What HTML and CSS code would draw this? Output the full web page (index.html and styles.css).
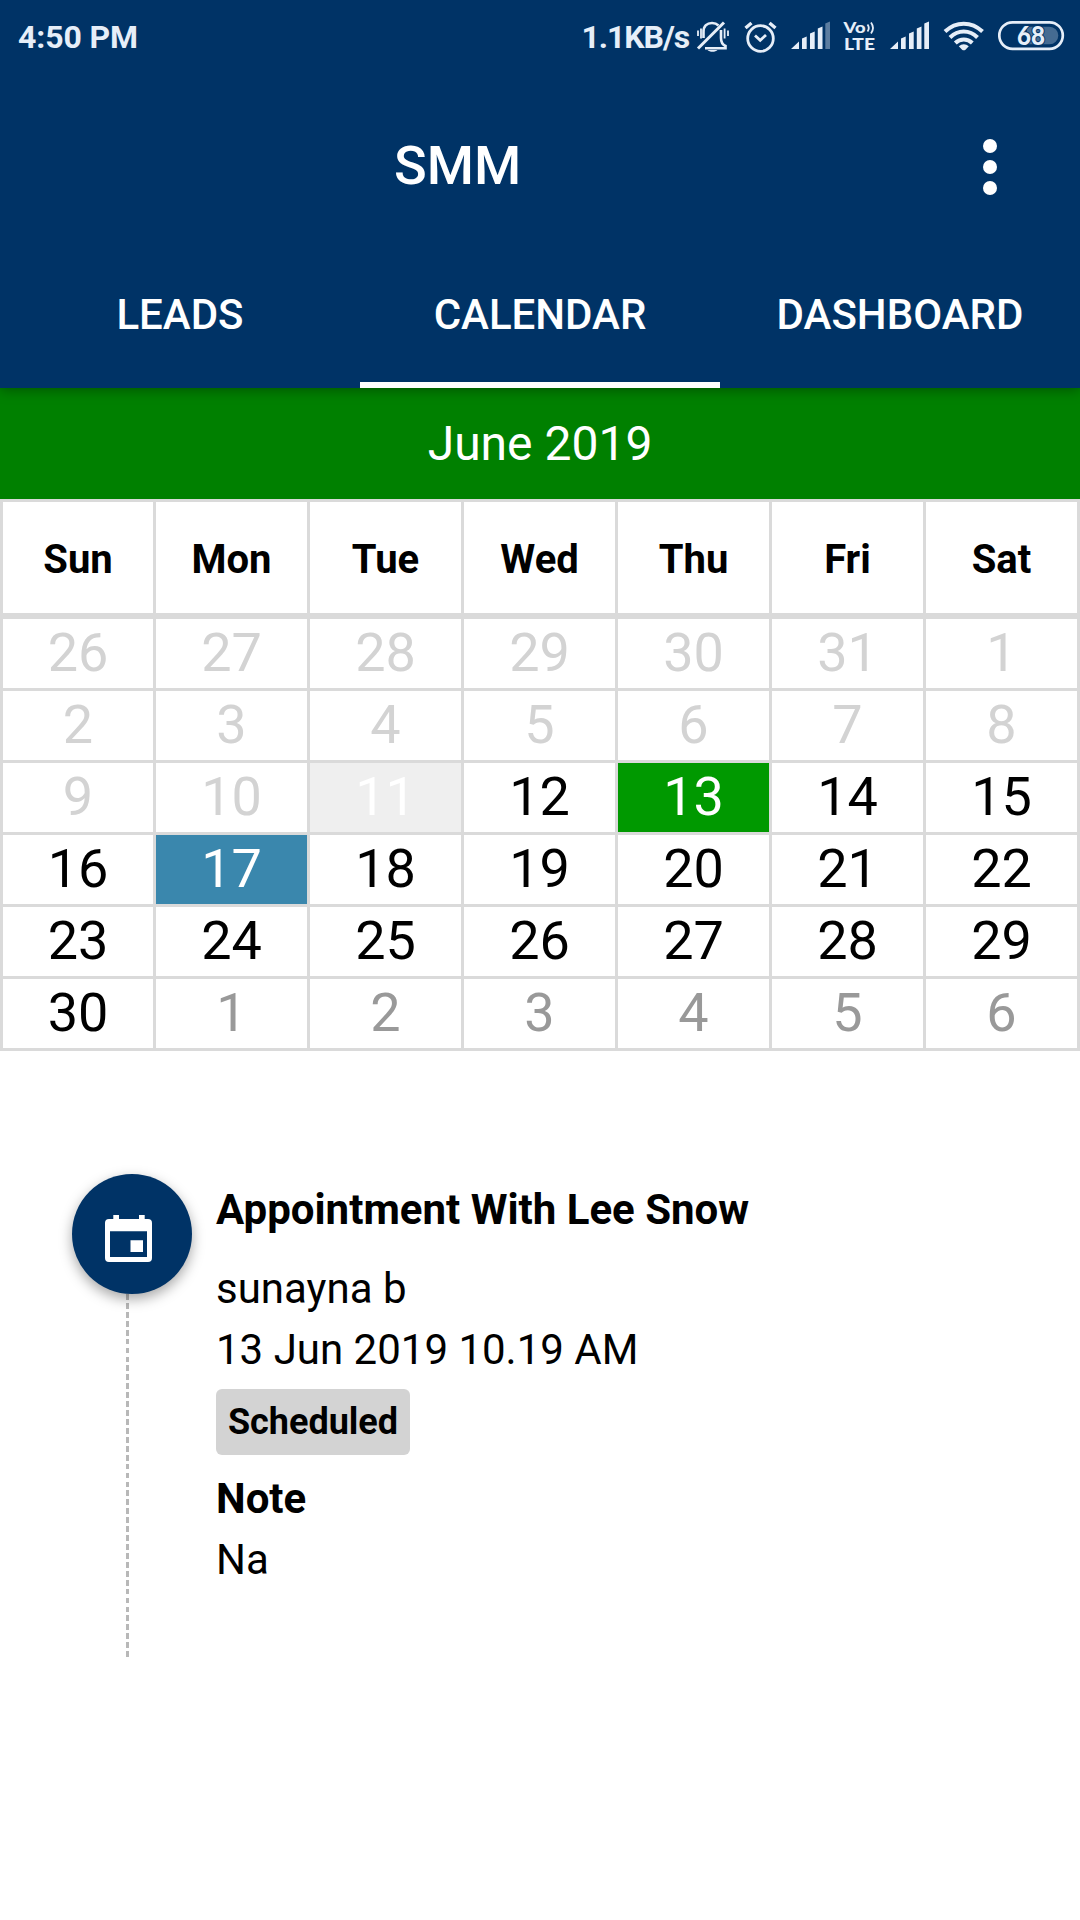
FILE: index.html
```
<!DOCTYPE html>
<html lang="en">
<head>
  <meta charset="UTF-8" />
  <meta name="viewport" content="width=device-width, initial-scale=1.0" />
  <title>SMM</title>
  <link rel="stylesheet" href="styles.css">
</head>
<body>
  <header class="header">
    <div class="status-bar">
      <span class="clock">4:50 PM</span>
      <div class="status-icons">
        <span class="speed">1.1KB/s</span>
        <!-- muted bell -->
        <svg class="bell" width="34" height="34" viewBox="0 0 34 34" fill="none" stroke="#e6eef8" stroke-width="2.6">
          <path d="M7.500 18V12C7.500 6 11 3 16 3c3 0 5 1 6.500 2.500M25 10v8c0 4 2 7 4.500 8v2.300H9" />
          <path d="M28 2.500L2 28.500" stroke-width="3" />
          <path d="M2 10.500v5.500M5 8.500v10M28.600 8.500v10M32 10.500v5.500" stroke-width="1.800" />
          <path d="M11.500 30h10c-2 2.400-8 2.400-10 0z" fill="#e6eef8" stroke="none" />
        </svg>
        <!-- alarm -->
        <svg class="alarm" width="34" height="34" viewBox="0 0 34 34" fill="none" stroke="#e6eef8" stroke-width="2.800">
          <circle cx="16.500" cy="18.500" r="12.800" />
          <path d="M1.500 8l6-5M31.500 8l-6-5" stroke-width="3.400" />
          <path d="M11 15.500l5.200 4.800 5.800-5.300" />
        </svg>
        <svg class="signal" width="39" height="34" viewBox="0 0 39 34" fill="#e6eef8">
          <path d="M0 29l8-7.500V29zM11 18.500l4.700-2V29H11zM19 13.500l4.700-2V29H19zM26.800 8.500l4.700-2V29h-4.700z" />
          <path d="M34.300 3.500l4.700-2V29h-4.700z" opacity=".4" />
        </svg>
        <svg class="volte" width="34" height="34" viewBox="0 0 34 34" fill="#e6eef8">
          <text class="vo" x="0.500" y="13" textLength="22" lengthAdjust="spacingAndGlyphs">Vo</text>
          <text class="lte" x="1" y="30" textLength="31" lengthAdjust="spacingAndGlyphs">LTE</text>
          <path d="M24.500 4.500q2.600 3.500 0 7M28 2.500q4 5.500 0 11" fill="none" stroke="#e6eef8" stroke-width="1.800" />
        </svg>
        <svg class="signal" width="39" height="34" viewBox="0 0 39 34" fill="#e6eef8">
          <path d="M0 29l8-7.500V29zM11 18.500l4.700-2V29H11zM19 13.500l4.700-2V29H19zM26.800 8.500l4.700-2V29h-4.700zM34.300 3.500l4.700-2V29h-4.700z" />
        </svg>
        <svg class="wifi" width="42" height="34" viewBox="0 0 42 34" fill="none" stroke="#e6eef8" stroke-width="4">
          <path d="M2 11.500C13 1 28.500 1 39.500 11.500M7 17.500c8-8 19.500-8 27.500 0M12.300 23c5-4.800 12-4.800 17 0" />
          <path d="M15.800 26.300c3-2.700 7-2.700 10 0l-3.300 3.400c-1 .8-2.400.8-3.400 0z" fill="#e6eef8" stroke="none" />
        </svg>
        <svg class="battery" width="68" height="34" viewBox="0 0 68 34">
          <rect x="2.300" y="2.300" width="63.500" height="26.500" rx="13.200" fill="none" stroke="#e6eef8" stroke-width="2.700" />
          <path d="M30 6.700h22.500a8.800 8.800 0 0 1 0 17.600H30z" fill="#e6eef8" opacity=".3" />
          <text class="battery-level" x="34" y="25" textLength="28" lengthAdjust="spacingAndGlyphs">68</text>
        </svg>
      </div>
    </div>

    <div class="title-bar">
      <h1 class="title">SMM</h1>
      <div class="menu">
        <span class="dot"></span>
        <span class="dot"></span>
        <span class="dot"></span>
      </div>
    </div>

    <nav class="tabs">
      <a class="tab">LEADS</a>
      <a class="tab active">CALENDAR</a>
      <a class="tab">DASHBOARD</a>
    </nav>
  </header>

  <div class="month">June 2019</div>

  <div class="calendar">
    <div class="week weekdays">
      <div>Sun</div><div>Mon</div><div>Tue</div><div>Wed</div><div>Thu</div><div>Fri</div><div>Sat</div>
    </div>
    <div class="week past">
      <div>26</div><div>27</div><div>28</div><div>29</div><div>30</div><div>31</div><div>1</div>
    </div>
    <div class="week past">
      <div>2</div><div>3</div><div>4</div><div>5</div><div>6</div><div>7</div><div>8</div>
    </div>
    <div class="week">
      <div class="off">9</div><div class="off">10</div><div class="today">11</div><div>12</div><div class="booked">13</div><div>14</div><div>15</div>
    </div>
    <div class="week">
      <div>16</div><div class="selected">17</div><div>18</div><div>19</div><div>20</div><div>21</div><div>22</div>
    </div>
    <div class="week">
      <div>23</div><div>24</div><div>25</div><div>26</div><div>27</div><div>28</div><div>29</div>
    </div>
    <div class="week">
      <div>30</div><div class="next">1</div><div class="next">2</div><div class="next">3</div><div class="next">4</div><div class="next">5</div><div class="next">6</div>
    </div>
  </div>

  <section class="event">
    <div class="timeline">
      <div class="event-icon">
        <svg width="48" height="48" viewBox="0 0 48 48">
          <path fill="#fff" fill-rule="evenodd" d="M8.300 0h5.700v4h20V0h5.700v4H43a4 4 0 0 1 4 4v35a4 4 0 0 1-4 4H4a4 4 0 0 1-4-4V8a4 4 0 0 1 4-4h4.300zM5 16.300V42h37V16.300zM25.500 25.300H38V37H25.500z" />
        </svg>
      </div>
      <div class="dashes"></div>
    </div>
    <div class="event-body">
      <h2 class="event-title">Appointment With Lee Snow</h2>
      <p>sunayna b</p>
      <p>13 Jun 2019 10.19 AM</p>
      <span class="badge">Scheduled</span>
      <p class="note">Note</p>
      <p>Na</p>
    </div>
  </section>
</body>
</html>
```

FILE: styles.css
```
* { box-sizing: border-box; }
body {
  margin: 0;
  min-height: 1920px;
  background: #fff;
  color: #000;
  font-family: Roboto, sans-serif;
}
h1, h2, p { margin: 0; }
svg { display: block; flex: none; overflow: visible; }

/* header */
.header {
  position: relative;
  height: 388px;
  background: #003366;
  color: #fff;
  box-shadow: 0 2px 12px rgba(0, 0, 0, 0.35);
}
.status-bar {
  display: flex;
  justify-content: space-between;
  align-items: center;
  height: 74px;
  padding: 0 15px 0 18px;
  color: #e6eef8;
  font-size: 32px;
  font-weight: 700;
}
.clock { letter-spacing: -0.1px; }
.status-icons { display: flex; align-items: center; }
.speed { margin-right: 7px; letter-spacing: -1.1px; }
.bell { margin-right: 14px; }
.alarm { margin-right: 13px; }
.signal { margin-right: 13px; }
.volte { margin-right: 13px; }
.volte + .signal { margin-right: 14px; }
.wifi { margin-right: 12px; }
.vo { font: 900 15px Lato, sans-serif; }
.lte { font: 900 17.5px Lato, sans-serif; }
.battery-level {
  font: 900 26px Lato, sans-serif;
  fill: #e6eef8;
  stroke: #003366;
  stroke-width: 2px;
  paint-order: stroke;
  text-anchor: middle;
}

.title-bar {
  display: flex;
  justify-content: space-between;
  align-items: center;
  height: 166px;
  padding: 19px 83px 0 394px;
}
.title { padding-bottom: 3px; font-size: 54px; font-weight: 500; }
.menu { display: flex; flex-direction: column; gap: 7px; }
.dot { width: 14px; height: 14px; border-radius: 50%; background: #fff; }

.tabs { display: flex; height: 148px; }
.tab {
  flex: 1;
  border-bottom: 6px solid transparent;
  padding-top: 7px;
  text-align: center;
  font-size: 42px;
  font-weight: 500;
  line-height: 135px;
}
.active { border-bottom-color: #fff; }

/* calendar */
.month {
  height: 111px;
  background: #008000;
  color: #fff;
  font-size: 48px;
  line-height: 111px;
  text-align: center;
}
.calendar {
  display: grid;
  gap: 3px;
  padding: 3px;
  background: #dadada;
}
.week {
  display: grid;
  grid-template-columns: 150px repeat(6, 151px);
  gap: 3px;
  font-size: 54px;
  line-height: 67px;
  text-align: center;
}
.week div { height: 69px; background: #fff; }
.weekdays {
  margin-bottom: 3px;
  font-size: 40px;
  font-weight: 700;
  line-height: 116px;
}
.weekdays div { height: 111px; }
.past, .off { color: #d3d3d3; }
.next { color: #999; }
.week .today { background: #efefef; color: #fff; }
.week .booked { background: #009900; color: #fff; }
.week .selected { background: #3a87ad; color: #fff; }

/* appointment */
.event {
  display: flex;
  gap: 24px;
  padding: 123px 72px 0;
}
.event-icon {
  position: relative;
  width: 120px;
  height: 120px;
  padding: 41px 0 0 33px;
  border-radius: 50%;
  background: #003366;
  box-shadow: 0 5px 13px rgba(0, 0, 0, 0.35);
}
.dashes {
  width: 3px;
  height: 363px;
  margin-left: 54px;
  background: repeating-linear-gradient(#b8b8b8 0 5.8px, transparent 5.8px 8.93px);
}
.event-body {
  padding-top: 5px;
  font-size: 42px;
  line-height: 61px;
}
.event-title {
  margin-bottom: 18px;
  font-size: 42px;
  font-weight: 700;
}
.badge {
  display: block;
  width: 194px;
  height: 66px;
  margin: 9px 0 13px;
  border-radius: 6px;
  background: #d3d3d3;
  font-size: 36px;
  font-weight: 700;
  line-height: 67px;
  text-align: center;
}
.note { font-weight: 700; }
```
